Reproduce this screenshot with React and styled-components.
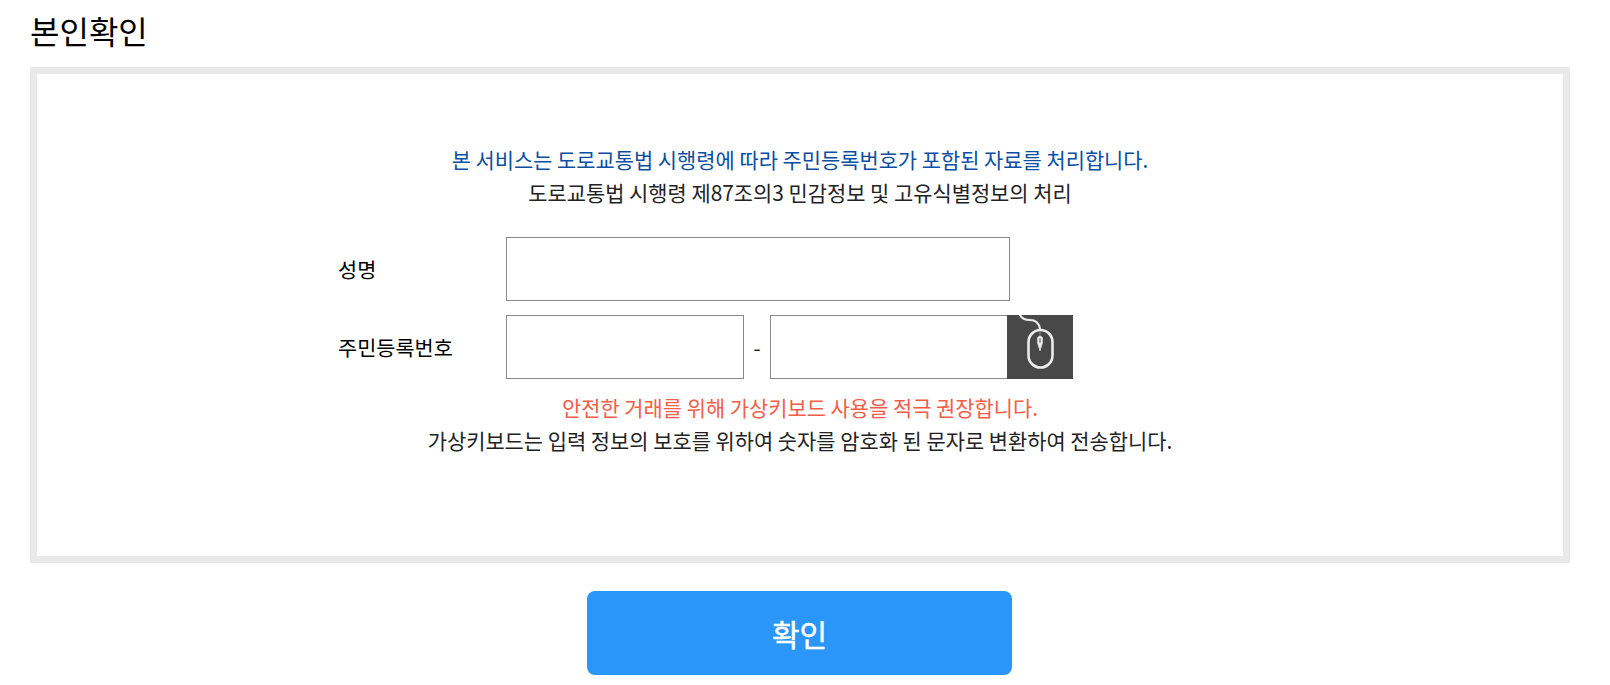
import React from 'react';
import styled, { createGlobalStyle } from 'styled-components';

const GlobalStyle = createGlobalStyle`
  html, body {
    margin: 0;
    padding: 0;
    background: #fff;
  }
  body {
    font-family: "Noto Sans CJK KR", "Noto Sans", sans-serif;
    color: #222;
  }
  * {
    box-sizing: border-box;
  }
`;

const Page = styled.div`
  width: 1610px;
  height: 685px;
  padding: 0 40px 0 30px;
  overflow: hidden;
`;

const Title = styled.h2`
  margin: 0;
  height: 67px;
  padding-top: 8px;
  font-size: 32px;
  line-height: 44px;
  font-weight: 400;
  color: #000;
`;

const Panel = styled.div`
  height: 496px;
  border: 7px solid #e9e9e9;
  padding-top: 69px;
  display: flex;
  flex-direction: column;
  align-items: center;
`;

const Notice = styled.p`
  margin: 0;
  font-size: 20.9px;
  line-height: 33px;
  text-align: center;
  color: ${props => props.$color || '#222'};
`;

const Form = styled.div`
  width: 1540px;
  margin-top: 28px;
  padding-left: 308px;
  display: flex;
  flex-direction: column;
  gap: 14px;
`;

const Row = styled.div`
  display: flex;
  align-items: center;
  height: 64px;
`;

const Label = styled.label`
  width: 168px;
  font-size: 20.8px;
  color: #000;
`;

const Input = styled.input`
  width: ${props => props.$width}px;
  height: 64px;
  border: 1px solid #8a8a8a;
  outline: none;
  background: #fff;
`;

const Dash = styled.span`
  width: 26px;
  text-align: center;
  font-size: 20.8px;
`;

const KeypadButton = styled.button`
  width: 66px;
  height: 64px;
  margin-left: -2px;
  padding: 0;
  border: none;
  background: #484848;
  display: flex;
  align-items: center;
  justify-content: center;
`;

const Messages = styled.div`
  margin-top: 12px;
`;

const SubmitWrap = styled.div`
  display: flex;
  justify-content: center;
  margin-top: 28px;
  padding-right: 1px;
`;

const SubmitButton = styled.button`
  width: 425px;
  height: 84px;
  border: none;
  border-radius: 8px;
  background: #2b96fa;
  color: #fff;
  font-family: inherit;
  font-size: 30px;
  font-weight: 400;
  -webkit-text-stroke: 0.5px #fff;
`;

const MouseIcon = () => (
  <svg width="66" height="64" viewBox="0 0 66 64" fill="none" stroke="#ececec" strokeLinecap="round">
    <path d="M13 0 C15 4 18 5 23 5 C29 5 32 8 33 14" strokeWidth="2.200" />
    <rect x="21.500" y="15" width="24" height="37.500" rx="12" strokeWidth="2.600" />
    <path d="M33 15 V21" strokeWidth="0.800" opacity="0.500" />
    <path d="M30.500 23 C30.500 20.500 35.500 20.500 35.500 23 V28 L33 36 L30.500 28 Z" fill="#ececec" strokeWidth="0.500" />
    <path d="M33 24 V27" stroke="#777" strokeWidth="1.500" />
  </svg>
);

const App = () => {
  return (
    <Page>
      <GlobalStyle />
      <Title>본인확인</Title>
      <Panel>
        <Notice $color="#0b4ea2">본 서비스는 도로교통법 시행령에 따라 주민등록번호가 포함된 자료를 처리합니다.</Notice>
        <Notice>도로교통법 시행령 제87조의3 민감정보 및 고유식별정보의 처리</Notice>
        <Form>
          <Row>
            <Label>성명</Label>
            <Input $width={504} />
          </Row>
          <Row>
            <Label>주민등록번호</Label>
            <Input $width={238} />
            <Dash>-</Dash>
            <Input $width={239} />
            <KeypadButton aria-label="가상키보드">
              <MouseIcon />
            </KeypadButton>
          </Row>
        </Form>
        <Messages>
          <Notice $color="#f45d48">안전한 거래를 위해 가상키보드 사용을 적극 권장합니다.</Notice>
          <Notice>가상키보드는 입력 정보의 보호를 위하여 숫자를 암호화 된 문자로 변환하여 전송합니다.</Notice>
        </Messages>
      </Panel>
      <SubmitWrap>
        <SubmitButton>확인</SubmitButton>
      </SubmitWrap>
    </Page>
  );
};

export default App;
